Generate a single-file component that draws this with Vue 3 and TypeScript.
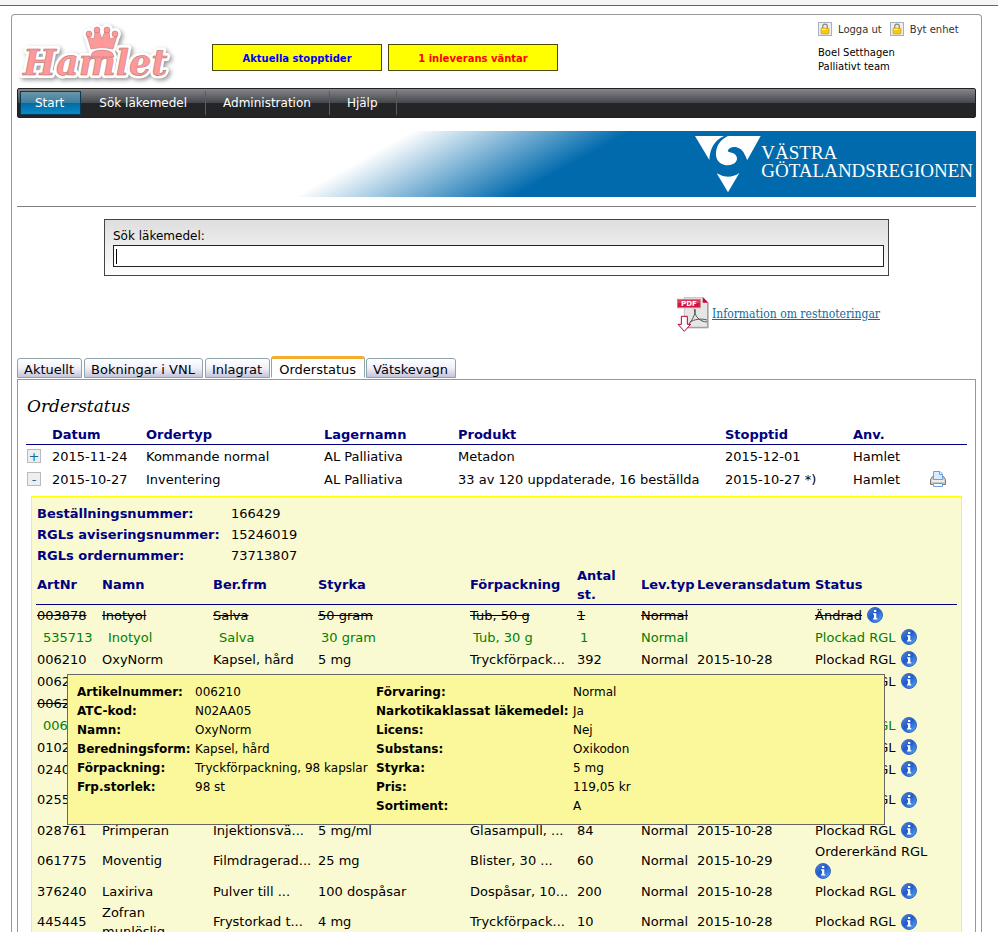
<script setup lang="ts">
import { ref } from 'vue'

interface Item {
  nr: string
  name?: string
  form?: string
  strength?: string
  pack?: string
  count?: string
  type?: string
  date?: string
  status: string
  kind?: 'old' | 'new' | 'tall'
}

const query = ref('')
const menu = ['Start', 'Sök läkemedel', 'Administration', 'Hjälp']
const tabs = ['Aktuellt', 'Bokningar i VNL', 'Inlagrat', 'Orderstatus', 'Vätskevagn']
const activeTab = ref('Orderstatus')

const numbers = [
  ['Beställningsnummer:', '166429'],
  ['RGLs aviseringsnummer:', '15246019'],
  ['RGLs ordernummer:', '73713807'],
]

const items: Item[] = [
  { nr: '003878', name: 'Inotyol', form: 'Salva', strength: '50 gram', pack: 'Tub, 50 g', count: '1', type: 'Normal', status: 'Ändrad', kind: 'old' },
  { nr: '535713', name: 'Inotyol', form: 'Salva', strength: '30 gram', pack: 'Tub, 30 g', count: '1', type: 'Normal', status: 'Plockad RGL', kind: 'new' },
  { nr: '006210', name: 'OxyNorm', form: 'Kapsel, hård', strength: '5 mg', pack: 'Tryckförpack...', count: '392', type: 'Normal', date: '2015-10-28', status: 'Plockad RGL' },
  { nr: '0062', status: 'Plockad RGL' },
  { nr: '0062', status: 'Ändrad', kind: 'old' },
  { nr: '006', status: 'Plockad RGL', kind: 'new' },
  { nr: '0102', status: 'Plockad RGL' },
  { nr: '0240', status: 'Plockad RGL' },
  { nr: '0255', status: 'Plockad RGL', kind: 'tall' },
  { nr: '028761', name: 'Primperan', form: 'Injektionsvä...', strength: '5 mg/ml', pack: 'Glasampull, ...', count: '84', type: 'Normal', date: '2015-10-28', status: 'Plockad RGL' },
  { nr: '061775', name: 'Moventig', form: 'Filmdragerad...', strength: '25 mg', pack: 'Blister, 30 ...', count: '60', type: 'Normal', date: '2015-10-29', status: 'Ordererkänd RGL', kind: 'tall' },
  { nr: '376240', name: 'Laxiriva', form: 'Pulver till ...', strength: '100 dospåsar', pack: 'Dospåsar, 10...', count: '200', type: 'Normal', date: '2015-10-28', status: 'Plockad RGL' },
  { nr: '445445', name: 'Zofran munlöslig', form: 'Frystorkad t...', strength: '4 mg', pack: 'Tryckförpack...', count: '10', type: 'Normal', date: '2015-10-28', status: 'Plockad RGL', kind: 'tall' },
]

const factsLeft = [
  ['Artikelnummer:', '006210'],
  ['ATC-kod:', 'N02AA05'],
  ['Namn:', 'OxyNorm'],
  ['Beredningsform:', 'Kapsel, hård'],
  ['Förpackning:', 'Tryckförpackning, 98 kapslar'],
  ['Frp.storlek:', '98 st'],
]
const factsRight = [
  ['Förvaring:', 'Normal'],
  ['Narkotikaklassat läkemedel:', 'Ja'],
  ['Licens:', 'Nej'],
  ['Substans:', 'Oxikodon'],
  ['Styrka:', '5 mg'],
  ['Pris:', '119,05 kr'],
  ['Sortiment:', 'A'],
]
</script>

<template>
  <div class="page">
    <div class="topbar"></div>
    <div class="shell">
      <header class="header">
        <svg class="logo" viewBox="0 0 160 68" role="img" aria-label="Hamlet">
          <defs>
            <g id="crown">
              <path d="M74 29 L70 16 Q73 18 77 19 L78 11 H82 L85 19 L88 11 H92 L93 19 Q97 18 100 16 L96 29 Q85 26 74 29Z" />
              <path d="M74 37 Q74 32 78 31 Q85 29 92 31 Q96 32 97 37Z" />
              <circle cx="72" cy="14" r="3" /><circle cx="80" cy="10" r="3" />
              <circle cx="90" cy="10" r="3" /><circle cx="98" cy="14" r="3" />
            </g>
          </defs>
          <g class="logo-shadow">
            <g class="logo-halo">
              <use href="#crown" />
              <text x="6" y="55">Hamlet</text>
            </g>
          </g>
          <g class="logo-face">
            <text x="6" y="55">Hamlet</text>
            <use href="#crown" />
          </g>
        </svg>
        <div class="notices">
          <button type="button" class="notice">Aktuella stopptider</button>
          <button type="button" class="notice alert">1 inleverans väntar</button>
        </div>
        <div class="account">
          <div class="account-links">
            <a v-for="label in ['Logga ut', 'Byt enhet']" :key="label" href="#">
              <svg viewBox="0 0 14 14" class="lock" aria-hidden="true">
                <rect x=".5" y=".5" width="13" height="13" fill="#e9edf4" stroke="#a9b0ba" />
                <path d="M4.700 7V4.500a2.300 2.300 0 0 1 4.600 0V7" fill="none" stroke="#8e8a7c" stroke-width="1.200" />
                <rect x="3" y="6" width="8" height="6" rx="1" fill="#f6c916" stroke="#c99a10" stroke-width=".6" />
                <path d="M4 7.500h4" stroke="#fff3a0" />
              </svg>
              <span>{{ label }}</span>
            </a>
          </div>
          <div>Boel Setthagen</div>
          <div>Palliativt team</div>
        </div>
      </header>

      <nav class="menu">
        <a v-for="(entry, i) in menu" :key="entry" href="#" :class="{ current: i === 0 }">{{ entry }}</a>
      </nav>

      <div class="banner">
        <svg class="mark" viewBox="105 30 198 174" aria-hidden="true">
          <path fill="#fff" d="M105 33 H192 Q150 52 148 105Z" />
          <path fill="#fff" d="M302 33 H204 C181 43 167 64 168 90 C169 109 184 121 204 121 C224 120 236 106 229 93 C223 81 208 84 203 78 C207 65 226 62 240 71 C252 79 255 92 262 105Z" />
          <path fill="#fff" d="M170 145 Q205 166 238 144 L204 202Z" />
        </svg>
        <div class="region">
          <div>VÄSTRA</div>
          <div>GÖTALANDSREGIONEN</div>
        </div>
      </div>

      <form class="search" @submit.prevent>
        <label for="drug">Sök läkemedel:</label>
        <div class="field">
          <input id="drug" v-model="query" type="text" />
          <span class="caret"></span>
        </div>
      </form>

      <div class="notes">
        <svg class="pdf" viewBox="0 0 96 105" aria-hidden="true">
          <path d="M22 1 H78 L94 18 V93 H22Z" fill="#e6e6e6" stroke="#c4c4c4" stroke-width="3" />
          <path d="M92 18 V91 H30" fill="none" stroke="#969696" stroke-width="3" />
          <path d="M77 0 L94 17 H77Z" fill="#d2003a" />
          <path d="M52 36 C60 36 52 62 34 84 M52 38 C53 58 68 74 90 75 M38 76 C52 66 74 64 90 69" fill="none" stroke="#555" stroke-width="3" />
          <rect x="1" y="7" width="69" height="25" fill="#d2143f" stroke="#b98a92" stroke-width="3" />
          <path d="M3 10 H68 V18 H3Z" fill="#e6607c" opacity=".6" />
          <text x="12" y="27" class="pdf-text">PDF</text>
          <path d="M13 58 H31 V82 H41 L22 103 L3 82 H13Z" fill="#fff" stroke="#b3003a" stroke-width="3" />
        </svg>
        <a href="#">Information om restnoteringar</a>
      </div>

      <div class="tabs" role="tablist">
        <button
          v-for="tab in tabs"
          :key="tab"
          type="button"
          role="tab"
          :aria-selected="tab === activeTab"
          :class="{ active: tab === activeTab }"
          @click="activeTab = tab"
        >{{ tab }}</button>
      </div>

      <main class="panel">
        <h1>Orderstatus</h1>
        <table class="orders">
          <colgroup>
            <col class="o-toggle" /><col class="o-date" /><col class="o-type" /><col class="o-store" />
            <col class="o-product" /><col class="o-stop" /><col class="o-user" /><col />
          </colgroup>
          <thead>
            <tr>
              <th></th><th>Datum</th><th>Ordertyp</th><th>Lagernamn</th><th>Produkt</th><th>Stopptid</th><th>Anv.</th><th></th>
            </tr>
          </thead>
          <tbody>
            <tr>
              <td><button type="button" class="toggle">+</button></td>
              <td>2015-11-24</td><td>Kommande normal</td><td>AL Palliativa</td><td>Metadon</td><td>2015-12-01</td><td>Hamlet</td><td></td>
            </tr>
            <tr>
              <td><button type="button" class="toggle">-</button></td>
              <td>2015-10-27</td><td>Inventering</td><td>AL Palliativa</td><td>33 av 120 uppdaterade, 16 beställda</td><td>2015-10-27 *)</td><td>Hamlet</td>
              <td>
                <svg class="printer" viewBox="0 0 16 16" aria-hidden="true">
                  <path d="M2.500 5.500 .5 8.500v5h15v-5l-2-3Z" fill="#c9c9cb" stroke="#77777a" />
                  <path d="M3.500 8.500V.5h6.500l2.500 2.500v5.500Z" fill="#d9eaff" stroke="#6ba0e0" />
                  <path d="M9.500 1v2.500H12" fill="#fff" stroke="#6ba0e0" />
                  <path d="M1.500 9h13v2h-13Z" fill="#ededee" />
                  <path d="M3.500 12.500h9v3h-9Z" fill="#fff" stroke="#6ba0e0" />
                </svg>
              </td>
            </tr>
          </tbody>
        </table>

        <section class="details">
          <dl class="numbers">
            <template v-for="[label, value] in numbers" :key="label">
              <dt>{{ label }}</dt>
              <dd>{{ value }}</dd>
            </template>
          </dl>

          <table class="items">
            <colgroup>
              <col class="i-nr" /><col class="i-name" /><col class="i-form" /><col class="i-strength" />
              <col class="i-pack" /><col class="i-count" /><col class="i-type" /><col class="i-date" /><col />
            </colgroup>
            <thead>
              <tr>
                <th>ArtNr</th><th>Namn</th><th>Ber.frm</th><th>Styrka</th><th>Förpackning</th>
                <th class="wrap">Antal st.</th><th>Lev.typ</th><th>Leveransdatum</th><th>Status</th>
              </tr>
            </thead>
            <tbody>
              <tr v-for="(item, i) in items" :key="i" :class="item.kind">
                <td><span>{{ item.nr }}</span></td>
                <td class="wrap"><span>{{ item.name }}</span></td>
                <td><span>{{ item.form }}</span></td>
                <td><span>{{ item.strength }}</span></td>
                <td><span>{{ item.pack }}</span></td>
                <td><span>{{ item.count }}</span></td>
                <td><span>{{ item.type }}</span></td>
                <td>{{ item.date }}</td>
                <td class="status">
                  <div>
                    <span>{{ item.status }}</span>
                    <svg class="info" viewBox="0 0 16 16" aria-hidden="true">
                      <defs>
                        <linearGradient id="infoBlue" x1="0" y1="0" x2="1" y2="1">
                          <stop offset="0" stop-color="#5b86e0" />
                          <stop offset=".45" stop-color="#1f5acb" />
                          <stop offset="1" stop-color="#62b0f4" />
                        </linearGradient>
                      </defs>
                      <circle cx="8" cy="8" r="7.500" fill="url(#infoBlue)" stroke="#3a68c4" />
                      <path d="M7 3h2.300v2H7ZM6 6.300h3.300v4.900h1V12.500H6v-1.300h1V7.600H6Z" fill="#fff" />
                    </svg>
                  </div>
                </td>
              </tr>
            </tbody>
          </table>

          <div class="tooltip" role="tooltip">
            <dl class="facts left">
              <template v-for="[label, value] in factsLeft" :key="label">
                <dt>{{ label }}</dt>
                <dd>{{ value }}</dd>
              </template>
            </dl>
            <dl class="facts right">
              <template v-for="[label, value] in factsRight" :key="label">
                <dt>{{ label }}</dt>
                <dd>{{ value }}</dd>
              </template>
            </dl>
          </div>
        </section>
      </main>
    </div>
  </div>
</template>

<style>
body {
  margin: 0;
  background: #fff;
}
</style>

<style scoped>
* {
  box-sizing: border-box;
}
.page {
  height: 100vh;
  overflow: hidden;
  display: flex;
  flex-direction: column;
  font: 13px/19px Verdana, 'DejaVu Sans', sans-serif;
  color: #000;
}
.topbar {
  flex: none;
  height: 6px;
  background: #f6f6f6;
  border-bottom: 1px solid #666;
}
.shell {
  flex: 1;
  min-height: 0;
  margin: 8px 16px 0 11px;
  padding: 0 5px;
  border: 1px solid #999;
  border-bottom: 0;
  border-radius: 4px 4px 0 0;
}
.header {
  display: flex;
  height: 73px;
}
.logo {
  width: 160px;
  height: 68px;
  margin-top: 5px;
  overflow: visible;
}
.logo text {
  font: italic bold 35px 'DejaVu Serif', serif;
}
.logo-halo {
  fill: #fff;
  stroke: #fff;
  stroke-width: 6;
  stroke-linejoin: round;
}
.logo-shadow {
  filter: drop-shadow(2px 2px 2px rgba(0, 0, 0, 0.4));
}
.logo-face {
  fill: #ff9898;
  stroke: #a87070;
  stroke-width: 0.5;
}
.notices {
  display: flex;
  gap: 6px;
  margin: 29px 0 0 35px;
}
.notice {
  width: 170px;
  height: 27px;
  padding: 2px 0 0;
  border: 1px solid #4c4c00;
  background: #ff0;
  color: #00f;
  font: bold 10px/14px Verdana, 'DejaVu Sans', sans-serif;
}
.notice.alert {
  color: #f00;
}
.account {
  width: 158px;
  margin: 7px 0 0 auto;
  font-size: 10px;
  line-height: 14px;
}
.account-links {
  display: flex;
  gap: 8px;
  margin-bottom: 10px;
}
.account-links a {
  display: flex;
  gap: 6px;
  color: #333;
  line-height: 16px;
  height: 14px;
  text-decoration: none;
}
.lock {
  width: 14px;
  height: 14px;
}
.menu {
  display: flex;
  height: 30px;
  padding: 2px;
  border: 1px solid #222;
  border-radius: 2px;
  background: linear-gradient(#85878a, #43464a 50%, #232527 50%);
}
.menu a {
  padding: 0 18px 0 17px;
  border-right: 1px solid #5b5c5e;
  color: #fff;
  font-size: 12px;
  line-height: 25px;
  text-decoration: none;
}
.menu a.current {
  margin-right: 1px;
  padding: 0 16px 0 14px;
  border: 1px solid #0b3a52;
  background: linear-gradient(#6b96a9, #3f7f9f 48%, #006aa4 50%, #0b8ac6);
  line-height: 23px;
}
.banner {
  display: flex;
  justify-content: flex-end;
  height: 66px;
  margin-top: 13px;
  background: linear-gradient(151deg, #fff 192px, #006aad 298px);
}
.mark {
  width: 66px;
  height: 58px;
  margin-top: 4px;
}
.region {
  margin: 13px 3px 0 0;
  color: #fff;
  font: 19px/18px 'Liberation Serif', serif;
}
.search {
  position: relative;
  margin: 22px 87px 0;
  padding: 8px 4px 8px 8px;
  border: 1px solid #444;
  background: linear-gradient(#dedede, #fdfdfd);
  font-size: 12px;
  line-height: 17px;
}
.search::before {
  content: '';
  position: absolute;
  top: -14px;
  left: -88px;
  right: -88px;
  border-top: 1px solid #808080;
}
.search label {
  display: block;
}
.field {
  position: relative;
}
.field input {
  display: block;
  width: 100%;
  height: 22px;
  padding: 0 4px;
  border: 1px solid #222;
  background: #fff;
  font: inherit;
}
.caret {
  position: absolute;
  top: 4px;
  left: 3px;
  width: 1px;
  height: 15px;
  background: #000;
}
.notes {
  display: flex;
  justify-content: flex-end;
  gap: 3px;
  margin: 21px 96px 24px 0;
}
.pdf {
  width: 32px;
  height: 35px;
}
.pdf-text {
  fill: #fff;
  font: bold 21px 'DejaVu Sans', sans-serif;
}
.notes a {
  color: #0a6ea3;
  font: 12px/34px 'DejaVu Serif Condensed', 'DejaVu Serif', serif;
}
.tabs {
  display: flex;
  align-items: flex-end;
  height: 22px;
  gap: 2px;
}
.tabs button {
  height: 20px;
  padding: 2px 7px 0 6px;
  border: 1px solid #91a3ab;
  border-radius: 3px 3px 0 0;
  background: linear-gradient(#fff, #f0f0fa 50%, #c4c4dc);
  color: #000;
  font: 13px/17px Verdana, 'DejaVu Sans', sans-serif;
}
.tabs button.active {
  height: 22px;
  margin: 0 -1px;
  padding: 2px 8px 0 7px;
  border-top: 3px solid #f5ab2c;
  border-bottom-color: #fff;
  background: #fff;
}
.panel {
  margin-top: 1px;
  padding: 0 8px;
  border: 1px solid #919b9c;
  height: 100%;
}
h1 {
  margin: 14px 0 7px 1px;
  font: italic 17px/24px 'DejaVu Serif', serif;
}
table {
  width: 100%;
  border-collapse: collapse;
  table-layout: fixed;
}
th,
td {
  padding: 0;
  text-align: left;
  vertical-align: middle;
  white-space: nowrap;
}
th {
  color: #000080;
}
.orders thead tr {
  height: 19px;
  border-bottom: 1px solid #000080;
}
.orders tbody tr {
  height: 23px;
}
.o-toggle { width: 26px; }
.o-date { width: 94px; }
.o-type { width: 178px; }
.o-store { width: 134px; }
.o-product { width: 267px; }
.o-stop { width: 128px; }
.o-user { width: 77px; }
.toggle {
  display: block;
  width: 14px;
  height: 14px;
  margin-left: 1px;
  padding: 0;
  border: 1px solid #bbb;
  background: #eee;
  color: #0a6ea3;
  font: 13px/11px Verdana, 'DejaVu Sans', sans-serif;
}
.printer {
  display: block;
  width: 16px;
  height: 16px;
}
.details {
  position: relative;
  margin: 5px 5px 0;
  padding: 6px 4px 0;
  border: 1px solid #ff0;
  background: #fafad2;
}
.numbers {
  display: grid;
  grid-template-columns: 194px 1fr;
  margin: 0 0 0 1px;
  line-height: 21px;
}
dt {
  font-weight: bold;
}
dd {
  margin: 0;
}
.numbers dt {
  color: #000080;
}
.items thead tr {
  height: 38px;
  border-bottom: 1px solid #000080;
}
.items th,
.items td {
  padding-left: 1px;
}
.items .wrap {
  padding-right: 8px;
  white-space: normal;
}
.items tbody tr {
  height: 22px;
}
.items tbody tr.tall {
  height: 39px;
}
.i-nr { width: 65px; }
.i-name { width: 111px; }
.i-form { width: 105px; }
.i-strength { width: 152px; }
.i-pack { width: 107px; }
.i-count { width: 64px; }
.i-type { width: 56px; }
.i-date { width: 118px; }
.old span {
  text-decoration: line-through;
}
.new {
  color: #008000;
}
.items .new td {
  padding-left: 7px;
}
.items .new td:nth-child(n + 4) {
  padding-left: 4px;
}
.items .new td:nth-child(n + 7) {
  padding-left: 1px;
}
.status div {
  display: flex;
  flex-wrap: wrap;
  align-items: center;
  gap: 2px 5px;
  padding-right: 16px;
}
.info {
  width: 16px;
  height: 16px;
}
.tooltip {
  position: absolute;
  top: 177px;
  left: 35px;
  right: 76px;
  display: flex;
  padding: 8px 9px;
  border: 1px solid #666;
  background: #faf89a;
  font-size: 12px;
  white-space: nowrap;
}
.facts {
  display: grid;
  align-content: start;
  margin: 0;
}
.facts.left {
  grid-template-columns: 118px 181px;
}
.facts.right {
  grid-template-columns: 197px auto;
}
</style>
